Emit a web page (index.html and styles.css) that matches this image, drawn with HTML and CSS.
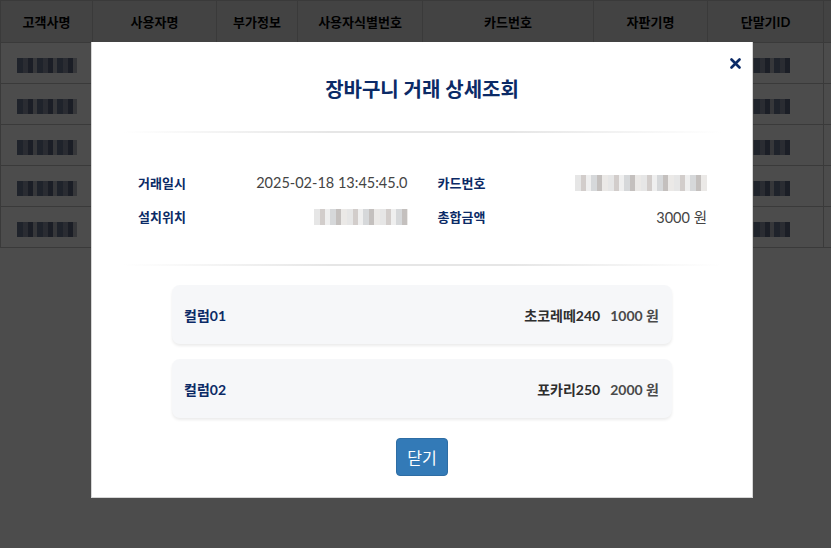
FILE: index.html
```html
<!DOCTYPE html>
<html lang="ko">
<head>
  <meta charset="UTF-8">
  <title>장바구니 거래 상세조회</title>
  <link rel="stylesheet" href="styles.css">
</head>
<body>
  <!-- 목록 테이블 -->
  <table class="list-table">
    <colgroup>
      <col style="width:92px">
      <col style="width:124px">
      <col style="width:81px">
      <col style="width:125px">
      <col style="width:171px">
      <col style="width:114px">
      <col style="width:116px">
      <col style="width:100px">
    </colgroup>
    <thead>
      <tr>
        <th>고객사명</th>
        <th>사용자명</th>
        <th>부가정보</th>
        <th>사용자식별번호</th>
        <th>카드번호</th>
        <th>자판기명</th>
        <th>단말기ID</th>
        <th></th>
      </tr>
    </thead>
    <tbody>
      <tr><td><span class="blur"></span></td><td></td><td></td><td></td><td></td><td></td><td><span class="blur id"></span></td><td></td></tr>
      <tr><td><span class="blur"></span></td><td></td><td></td><td></td><td></td><td></td><td><span class="blur id"></span></td><td></td></tr>
      <tr><td><span class="blur"></span></td><td></td><td></td><td></td><td></td><td></td><td><span class="blur id"></span></td><td></td></tr>
      <tr><td><span class="blur"></span></td><td></td><td></td><td></td><td></td><td></td><td><span class="blur id"></span></td><td></td></tr>
      <tr><td><span class="blur"></span></td><td></td><td></td><td></td><td></td><td></td><td><span class="blur id"></span></td><td></td></tr>
    </tbody>
  </table>

  <!-- 상세조회 모달 -->
  <div class="overlay">
    <div class="modal">
      <button class="close-btn" aria-label="닫기">
        <svg width="11" height="11" viewBox="0 0 11 11"><path d="M1.5 1.5 L9.5 9.5 M9.5 1.5 L1.5 9.5" stroke="#0b2a66" stroke-width="2.6" stroke-linecap="round"/></svg>
      </button>
      <h2 class="modal-title">장바구니 거래 상세조회</h2>
      <div class="divider"></div>

      <div class="info-grid">
        <div class="info-row">
          <span class="label">거래일시</span>
          <span class="value">2025-02-18 13:45:45.0</span>
        </div>
        <div class="info-row">
          <span class="label">카드번호</span>
          <span class="value"><span class="masked card"></span></span>
        </div>
        <div class="info-row">
          <span class="label">설치위치</span>
          <span class="value"><span class="masked place"></span></span>
        </div>
        <div class="info-row">
          <span class="label">총합금액</span>
          <span class="value">3000 원</span>
        </div>
      </div>

      <div class="divider"></div>

      <div class="item-list">
        <div class="item-card">
          <span class="item-col">컬럼01</span>
          <span class="item-info"><span class="item-name">초코레떼240</span><span class="item-price">1000 원</span></span>
        </div>
        <div class="item-card">
          <span class="item-col">컬럼02</span>
          <span class="item-info"><span class="item-name">포카리250</span><span class="item-price">2000 원</span></span>
        </div>
      </div>

      <div class="modal-footer">
        <button class="btn-close">닫기</button>
      </div>
    </div>
  </div>
</body>
</html>
```

FILE: styles.css
```css
/* 기본 */
body {
  margin: 0;
  font-family: Lato, "Noto Sans CJK KR", sans-serif;
  background-color: #fff;
  overflow: hidden;
}
/* 뒤쪽 목록 테이블 */
.list-table {
  border-collapse: collapse;
  table-layout: fixed;
  width: 923px;
}
.list-table th {
  height: 41px;
  padding: 0;
  background-color: #e2e2e2;
  border: 1px solid #c4c4c4;
  font-size: 13px;
  font-weight: 700;
  color: #000;
}
.list-table td {
  height: 40px;
  padding: 0;
  border: 1px solid #c4c4c4;
  text-align: center;
}
.blur {
  display: inline-block;
  width: 60px;
  height: 15px;
  vertical-align: middle;
  background: repeating-linear-gradient(90deg, #6a7690 0 6px, #8d95a8 6px 11px, #5b6680 11px 16px, #b4b8c2 16px 20px);
}
.blur.id {
  width: 56px;
  margin-left: -8px;
}
/* 오버레이 + 모달 */
.overlay {
  position: fixed;
  top: 0;
  left: 0;
  right: 0;
  bottom: 0;
  background-color: rgba(0, 0, 0, 0.7);
  padding: 42px 0 0 91px;
}
.modal {
  position: relative;
  box-sizing: border-box;
  width: 662px;
  background-color: #fff;
  border: 1px solid #d6d6d6;
  border-top: none;
  padding: 33px 0 21px;
}
.close-btn {
  position: absolute;
  top: 15px;
  right: 11px;
  padding: 0;
  border: none;
  background: none;
  cursor: pointer;
}
.modal-title {
  margin: 0;
  text-align: center;
  font-size: 20px;
  line-height: 28px;
  font-weight: 700;
  color: #0b2a66;
}
.divider {
  height: 2px;
  margin: 28px 30px 0;
  background: linear-gradient(to right, rgba(230,230,230,0), #e6e6e6 35%, #e6e6e6 65%, rgba(230,230,230,0));
}
/* 상세 정보 */
.info-grid {
  display: grid;
  grid-template-columns: 1fr 1fr;
  column-gap: 30px;
  row-gap: 14px;
  margin: 39px 45px 38px 46px;
}
.info-row {
  display: flex;
  justify-content: space-between;
  align-items: center;
  height: 20px;
}
.label {
  font-size: 13px;
  font-weight: 700;
  color: #0b2a66;
}
.value {
  font-size: 14.5px;
  color: #444;
}
.masked {
  display: inline-block;
  height: 16px;
  vertical-align: middle;
  background: repeating-linear-gradient(90deg, #e6e6e6 0 6px, #d2cdcb 6px 11px, #efefef 11px 16px, #d6d8da 16px 22px, #c4c0be 22px 27px, #ebe9e7 27px 33px);
}
.masked.card { width: 132px; }
.masked.place { width: 94px; }
/* 상품 목록 */
.item-list {
  display: flex;
  flex-direction: column;
  gap: 15px;
  width: 500px;
  margin: 19px auto 0;
}
.item-card {
  display: flex;
  justify-content: space-between;
  align-items: center;
  height: 59px;
  padding: 0 13px 0 12px;
  background-color: #f6f7f9;
  border-radius: 8px;
  box-shadow: 0 2px 3px rgba(0, 0, 0, 0.08);
  font-size: 14px;
  font-weight: 700;
}
.item-col {
  color: #0b2a66;
}
.item-name {
  color: #2e2e2e;
  margin-right: 10px;
}
.item-price {
  color: #4a4a4a;
}
/* 하단 버튼 */
.modal-footer {
  text-align: center;
  margin-top: 20px;
}
.btn-close {
  height: 38px;
  padding: 0 10px;
  border: 1px solid #2e6da4;
  border-radius: 4px;
  background-color: #337ab7;
  color: #fff;
  font-family: Lato, "Noto Sans CJK KR", sans-serif;
  font-size: 16px;
  cursor: pointer;
}
```
